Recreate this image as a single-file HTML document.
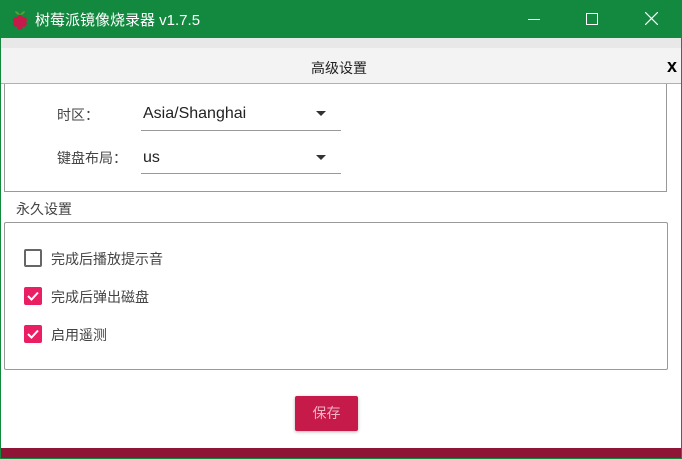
<!DOCTYPE html><html><head><meta charset="utf-8"><style>
body{margin:0;width:682px;height:459px;position:relative;overflow:hidden;font-family:"Liberation Sans","Noto Sans CJK SC",sans-serif;background:#fff}
.a{position:absolute}
.t{font-size:14px;color:#333}
</style></head><body>
<div class="a" style="left:0;top:0;width:682px;height:459px;box-sizing:border-box;border:1px solid #12893f;border-top:none"></div>
<div class="a" style="left:0;top:0;width:682px;height:38px;background:#12893f"></div>
<svg class="a" style="left:11px;top:10px" width="18" height="20" viewBox="0 0 18 20"><path d="M4 1q3 0 5 4q2-4 5-4q-1 4-5 4q-4 0-5-4z" fill="#5c9e2f"/><circle cx="9" cy="8" r="3" fill="#c51a4a"/><circle cx="5" cy="10" r="3" fill="#c51a4a"/><circle cx="13" cy="10" r="3" fill="#c51a4a"/><circle cx="5" cy="14" r="2.8" fill="#c51a4a"/><circle cx="13" cy="14" r="2.8" fill="#c51a4a"/><circle cx="9" cy="12.5" r="3" fill="#c51a4a"/><circle cx="9" cy="17" r="2.8" fill="#c51a4a"/></svg>
<div class="a" style="left:35px;top:9px;color:#fff;font-size:15px">树莓派镜像烧录器 v1.7.5</div>
<div class="a" style="left:528px;top:19px;width:12px;height:1px;background:#fff"></div>
<div class="a" style="left:586px;top:13px;width:10px;height:10px;border:1px solid #fff"></div>
<svg class="a" style="left:645px;top:12px" width="13" height="13"><path d="M0 0L13 13M13 0L0 13" stroke="#fff" stroke-width="1.2"/></svg>
<div class="a" style="left:1px;top:38px;width:680px;height:10px;background:#e8e8e8"></div>
<div class="a" style="left:1px;top:48px;width:680px;height:35px;background:#f3f3f3;border-bottom:1px solid #b0b0b0"></div>
<div class="a" style="left:311px;top:58px;font-size:14px;color:#222">高级设置</div>
<div class="a" style="left:667px;top:56px;font-size:18px;font-weight:bold;color:#000">x</div>
<div class="a" style="left:4px;top:84px;width:663px;height:108px;border:1px solid #999;border-top:none;box-sizing:border-box"></div>
<div class="a t" style="left:57px;top:105px;color:#444">时区：</div>
<div class="a" style="left:143px;top:105px;font-size:16px;color:#222">Asia/Shanghai</div>
<div class="a" style="left:316px;top:111px;border:5px solid transparent;border-top:5px solid #333;border-bottom:none"></div>
<div class="a" style="left:141px;top:130px;width:200px;height:1px;background:#999"></div>
<div class="a t" style="left:57px;top:148px;color:#444">键盘布局：</div>
<div class="a" style="left:143px;top:149px;font-size:16px;color:#222">us</div>
<div class="a" style="left:316px;top:155px;border:5px solid transparent;border-top:5px solid #333;border-bottom:none"></div>
<div class="a" style="left:141px;top:173px;width:200px;height:1px;background:#999"></div>
<div class="a t" style="left:16px;top:199px;color:#444">永久设置</div>
<div class="a" style="left:4px;top:222px;width:664px;height:148px;border:1px solid #999;box-sizing:border-box;border-radius:2px"></div>
<div class="a" style="left:24px;top:249px;width:18px;height:18px;border:2px solid #666;box-sizing:border-box;border-radius:2px"></div>
<div class="a t" style="left:51px;top:249px;color:#444">完成后播放提示音</div>
<svg class="a" style="left:24px;top:287px" width="18" height="18"><rect width="18" height="18" rx="2" fill="#e91e63"/><path d="M4 9l3.5 3.5L14 5.5" stroke="#fff" stroke-width="2" fill="none"/></svg>
<div class="a t" style="left:51px;top:287px;color:#444">完成后弹出磁盘</div>
<svg class="a" style="left:24px;top:325px" width="18" height="18"><rect width="18" height="18" rx="2" fill="#e91e63"/><path d="M4 9l3.5 3.5L14 5.5" stroke="#fff" stroke-width="2" fill="none"/></svg>
<div class="a t" style="left:51px;top:325px;color:#444">启用遥测</div>
<div class="a" style="left:295px;top:396px;width:63px;height:35px;background:#c51a4a;border-radius:2px;box-shadow:0 1px 3px rgba(0,0,0,.3);color:#f3b3c4;font-size:14px;text-align:center;line-height:35px">保存</div>
<div class="a" style="left:1px;top:448px;width:680px;height:10px;background:#8e1536"></div>
</body></html>
